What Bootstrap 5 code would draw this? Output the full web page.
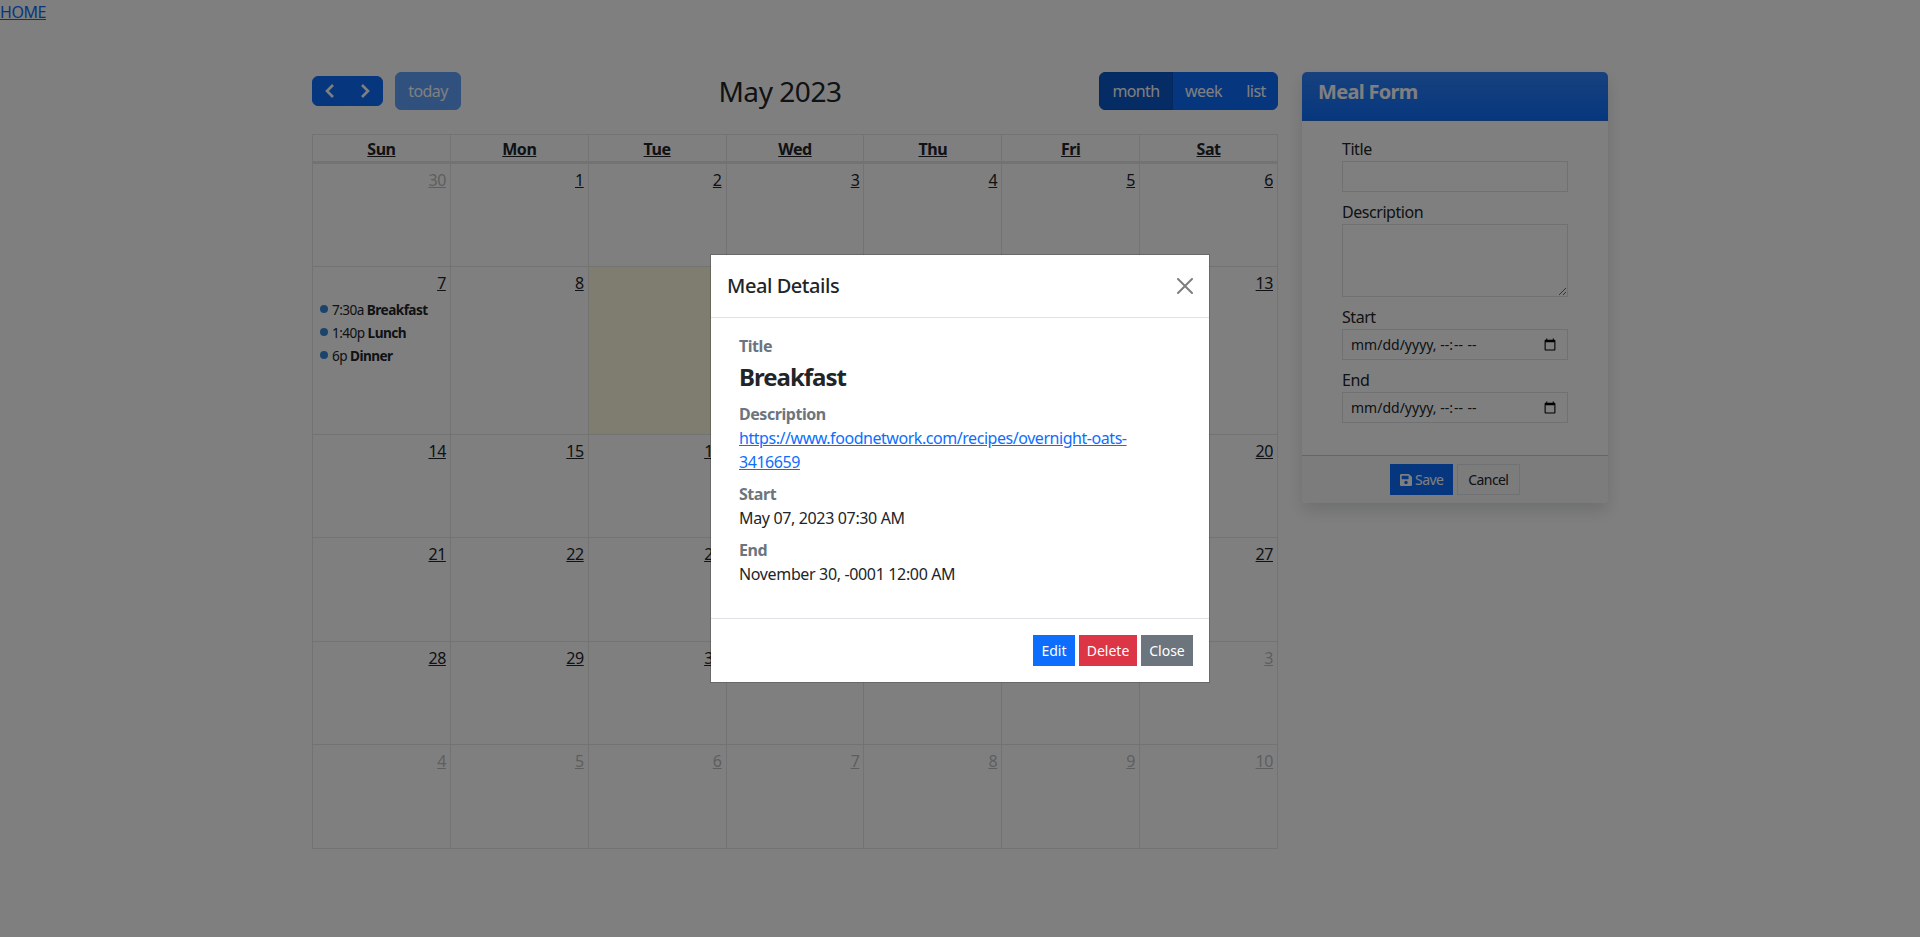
<!DOCTYPE html>
<html lang="en">
    <head>
        <title>Meal Calendar</title>
        <link href="https://cdn.jsdelivr.net/npm/bootstrap@5.3.3/dist/css/bootstrap.min.css" rel="stylesheet" />
        <style>
            body { font-family: "Noto Sans", "Open Sans", sans-serif; letter-spacing: -0.45px; }
            .home-link { display: block; width: fit-content; }
            .page-wrap { margin-top: 48px; }
            .cal-toolbar { height: 38px; margin-bottom: 24px; }
            .cal-title { font-size: 28px; line-height: 38px; margin: 0; font-weight: 400; }
            .arrow-btn { width: 36px; height: 30px; padding: 0; display: flex; align-items: center; justify-content: center; }
            .today-btn { width: 66px; margin-left: 12px; padding-left: 0; padding-right: 0; letter-spacing: -0.6px; }
            .view-btn { padding-left: 0; padding-right: 0; letter-spacing: -0.6px; }
            .view-month { width: 74px; flex: none; }
            .view-week { width: 63px; flex: none; }
            .view-list { width: 44px; flex: none; }
            .cal-grid { width: 966px; table-layout: fixed; border-collapse: collapse; }
            .cal-grid th, .cal-grid td { border: 1px solid #e6e6e6; }
            .cal-grid th { text-align: center; height: 28px; padding: 2px 0 0; border-bottom-width: 3px; line-height: 24px; }
            .cal-grid th a { color: #212529; }
            .cal-grid td { vertical-align: top; padding: 0; }
            .week-row { height: 103.6px; }
            .week-tall { height: 168px; }
            .day-num { display: block; width: fit-content; margin: 4px 4px 0 auto; color: #212529; line-height: 24px; }
            .day-out { opacity: 0.3; }
            .day-today { background: rgba(255, 220, 40, 0.15); }
            .cal-event { display: flex; align-items: center; height: 23px; padding-left: 7px; font-size: 13.6px; letter-spacing: -0.55px; color: #212529; white-space: nowrap; }
            .event-list { margin-top: 4px; }
            .event-dot { width: 8px; height: 8px; border-radius: 50%; background: #3788d8; margin-right: 4px; flex: none; position: relative; top: -1px; }
            .event-time { margin-right: 3px; }
            .form-heading { letter-spacing: -0.7px; }
            .form-wrap { padding: 0 24px 8px; }
            .form-area { height: 73px; }
            .save-icon { width: 12px; height: 14px; vertical-align: -2px; fill: currentColor; }
            .form-btn { width: 63px; padding-left: 0; padding-right: 0; letter-spacing: -0.6px; }
            .meal-name { font-weight: 700; }
            .meal-heading { margin: 5px 0 11px; letter-spacing: -1px; }
            .detail-value { letter-spacing: -0.35px; }
            .detail-btn { padding-left: 0; padding-right: 0; }
            .detail-btn + .detail-btn { margin-left: 0; }
            .edit-btn { width: 42px; }
            .delete-btn { width: 58px; }
            .close-btn { width: 52px; }
        </style>
    </head>
    <body>
        <a href="#" class="home-link">HOME</a>
        <div class="container page-wrap">
            <div class="row">
                <div class="col-md-9">
                    <div class="cal-toolbar d-flex align-items-center justify-content-between">
                        <div class="d-flex align-items-center">
                            <div class="btn-group">
                                <button class="btn btn-primary arrow-btn" aria-label="prev">
                                    <svg width="12" height="16" viewBox="0 0 12 16"><path d="M9 2 3 8l6 6" fill="none" stroke="currentColor" stroke-width="2.6" /></svg>
                                </button>
                                <button class="btn btn-primary arrow-btn" aria-label="next">
                                    <svg width="12" height="16" viewBox="0 0 12 16"><path d="m3 2 6 6-6 6" fill="none" stroke="currentColor" stroke-width="2.6" /></svg>
                                </button>
                            </div>
                            <button class="btn btn-primary today-btn" disabled>today</button>
                        </div>
                        <h2 class="cal-title">May 2023</h2>
                        <div class="btn-group">
                            <button class="btn btn-primary view-btn view-month active">month</button>
                            <button class="btn btn-primary view-btn view-week">week</button>
                            <button class="btn btn-primary view-btn view-list">list</button>
                        </div>
                    </div>
                    <table class="cal-grid">
                        <thead>
                            <tr>
                                <th><a href="#">Sun</a></th>
                                <th><a href="#">Mon</a></th>
                                <th><a href="#">Tue</a></th>
                                <th><a href="#">Wed</a></th>
                                <th><a href="#">Thu</a></th>
                                <th><a href="#">Fri</a></th>
                                <th><a href="#">Sat</a></th>
                            </tr>
                        </thead>
                        <tbody>
                            <tr class="week-row">
                                <td><a href="#" class="day-num day-out">30</a></td>
                                <td><a href="#" class="day-num">1</a></td>
                                <td><a href="#" class="day-num">2</a></td>
                                <td><a href="#" class="day-num">3</a></td>
                                <td><a href="#" class="day-num">4</a></td>
                                <td><a href="#" class="day-num">5</a></td>
                                <td><a href="#" class="day-num">6</a></td>
                            </tr>
                            <tr class="week-tall">
                                <td>
                                    <a href="#" class="day-num">7</a>
                                    <div class="event-list">
                                        <div class="cal-event"><span class="event-dot"></span><span class="event-time">7:30a</span><span class="meal-name">Breakfast</span></div>
                                        <div class="cal-event"><span class="event-dot"></span><span class="event-time">1:40p</span><span class="meal-name">Lunch</span></div>
                                        <div class="cal-event"><span class="event-dot"></span><span class="event-time">6p</span><span class="meal-name">Dinner</span></div>
                                    </div>
                                </td>
                                <td><a href="#" class="day-num">8</a></td>
                                <td class="day-today"><a href="#" class="day-num">9</a></td>
                                <td><a href="#" class="day-num">10</a></td>
                                <td><a href="#" class="day-num">11</a></td>
                                <td><a href="#" class="day-num">12</a></td>
                                <td><a href="#" class="day-num">13</a></td>
                            </tr>
                            <tr class="week-row">
                                <td><a href="#" class="day-num">14</a></td>
                                <td><a href="#" class="day-num">15</a></td>
                                <td><a href="#" class="day-num">16</a></td>
                                <td><a href="#" class="day-num">17</a></td>
                                <td><a href="#" class="day-num">18</a></td>
                                <td><a href="#" class="day-num">19</a></td>
                                <td><a href="#" class="day-num">20</a></td>
                            </tr>
                            <tr class="week-row">
                                <td><a href="#" class="day-num">21</a></td>
                                <td><a href="#" class="day-num">22</a></td>
                                <td><a href="#" class="day-num">23</a></td>
                                <td><a href="#" class="day-num">24</a></td>
                                <td><a href="#" class="day-num">25</a></td>
                                <td><a href="#" class="day-num">26</a></td>
                                <td><a href="#" class="day-num">27</a></td>
                            </tr>
                            <tr class="week-row">
                                <td><a href="#" class="day-num">28</a></td>
                                <td><a href="#" class="day-num">29</a></td>
                                <td><a href="#" class="day-num">30</a></td>
                                <td><a href="#" class="day-num">31</a></td>
                                <td><a href="#" class="day-num day-out">1</a></td>
                                <td><a href="#" class="day-num day-out">2</a></td>
                                <td><a href="#" class="day-num day-out">3</a></td>
                            </tr>
                            <tr class="week-row">
                                <td><a href="#" class="day-num day-out">4</a></td>
                                <td><a href="#" class="day-num day-out">5</a></td>
                                <td><a href="#" class="day-num day-out">6</a></td>
                                <td><a href="#" class="day-num day-out">7</a></td>
                                <td><a href="#" class="day-num day-out">8</a></td>
                                <td><a href="#" class="day-num day-out">9</a></td>
                                <td><a href="#" class="day-num day-out">10</a></td>
                            </tr>
                        </tbody>
                    </table>
                </div>
                <div class="col-md-3">
                    <div class="card border-0 rounded-1 shadow">
                        <div class="card-header bg-primary bg-gradient text-white">
                            <h5 class="fw-bold form-heading">Meal Form</h5>
                        </div>
                        <div class="card-body">
                            <form class="form-wrap">
                                <div class="mb-2">
                                    <label for="title" class="d-block">Title</label>
                                    <input type="text" id="title" class="form-control form-control-sm rounded-0" />
                                </div>
                                <div class="mb-2">
                                    <label for="description" class="d-block">Description</label>
                                    <textarea id="description" class="form-control form-control-sm rounded-0 form-area"></textarea>
                                </div>
                                <div class="mb-2">
                                    <label for="start" class="d-block">Start</label>
                                    <input type="datetime-local" id="start" class="form-control form-control-sm rounded-0" />
                                </div>
                                <div class="mb-2">
                                    <label for="end" class="d-block">End</label>
                                    <input type="datetime-local" id="end" class="form-control form-control-sm rounded-0" />
                                </div>
                            </form>
                        </div>
                        <div class="card-footer text-center py-2">
                            <button class="btn btn-primary btn-sm rounded-0 form-btn">
                                <svg class="save-icon" viewBox="0 0 448 512"><path d="M433.941 129.941l-83.882-83.882A48 48 0 0 0 316.118 32H48C21.49 32 0 53.49 0 80v352c0 26.51 21.49 48 48 48h352c26.51 0 48-21.49 48-48V163.882a48 48 0 0 0-14.059-33.941zM224 416c-35.346 0-64-28.654-64-64 0-35.346 28.654-64 64-64s64 28.654 64 64c0 35.346-28.654 64-64 64zm96-304.52V212c0 6.627-5.373 12-12 12H76c-6.627 0-12-5.373-12-12V108c0-6.627 5.373-12 12-12h228.52c3.183 0 6.235 1.264 8.485 3.515l3.48 3.48A11.996 11.996 0 0 1 320 111.48z" /></svg>
                                Save
                            </button>
                            <button class="btn btn-sm rounded-0 border form-btn">Cancel</button>
                        </div>
                    </div>
                </div>
            </div>
        </div>

        <div class="modal-backdrop fade show"></div>
        <div class="modal fade show d-block" tabindex="-1">
            <div class="modal-dialog modal-dialog-centered">
                <div class="modal-content rounded-0">
                    <div class="modal-header">
                        <h5 class="modal-title">Meal Details</h5>
                        <button type="button" class="btn-close" aria-label="Close"></button>
                    </div>
                    <div class="modal-body">
                        <div class="container-fluid">
                            <dl class="mb-0">
                                <dt class="text-secondary">Title</dt>
                                <dd><h4 class="fw-bold meal-heading">Breakfast</h4></dd>
                                <dt class="text-secondary">Description</dt>
                                <dd><a href="#">https://www.foodnetwork.com/recipes/overnight-oats-3416659</a></dd>
                                <dt class="text-secondary">Start</dt>
                                <dd class="detail-value">May 07, 2023 07:30 AM</dd>
                                <dt class="text-secondary">End</dt>
                                <dd class="detail-value mb-3">November 30, -0001 12:00 AM</dd>
                            </dl>
                        </div>
                    </div>
                    <div class="modal-footer">
                        <button class="btn btn-primary btn-sm rounded-0 detail-btn edit-btn">Edit</button>
                        <button class="btn btn-danger btn-sm rounded-0 detail-btn delete-btn">Delete</button>
                        <button class="btn btn-secondary btn-sm rounded-0 detail-btn close-btn">Close</button>
                    </div>
                </div>
            </div>
        </div>
        <script src="https://cdn.jsdelivr.net/npm/bootstrap@5.3.3/dist/js/bootstrap.bundle.min.js"></script>
    </body>
</html>
